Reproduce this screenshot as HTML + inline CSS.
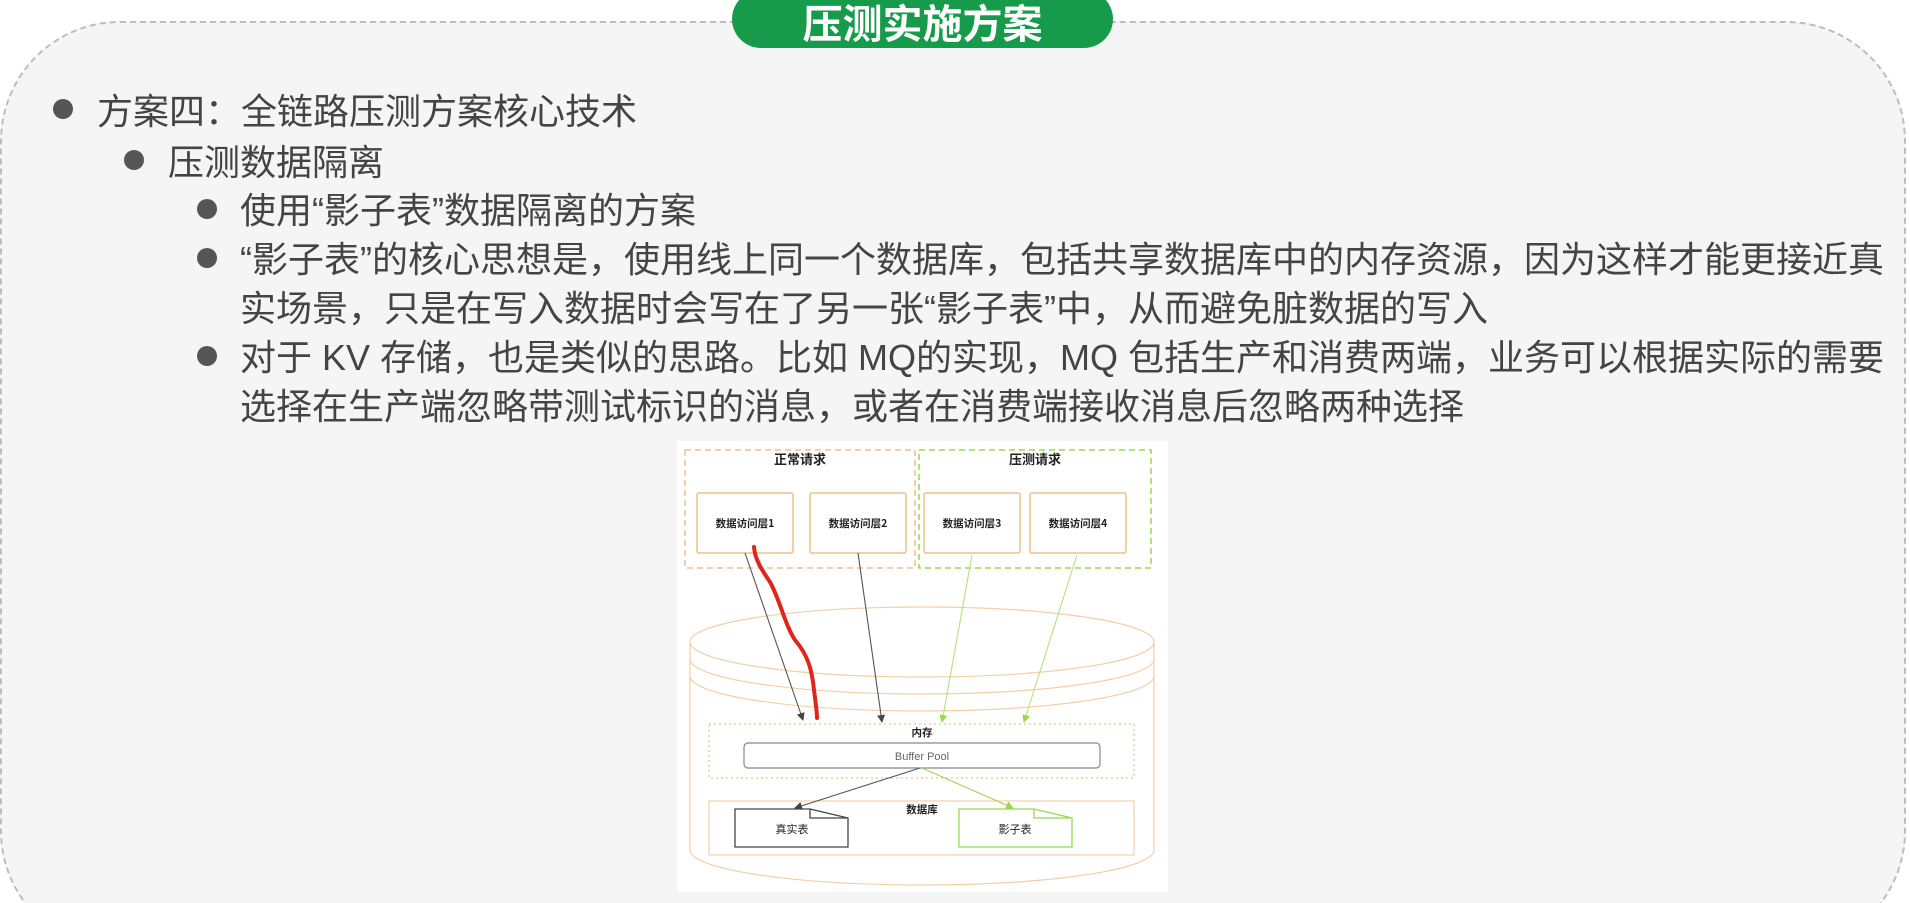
<!DOCTYPE html>
<html><head><meta charset="utf-8"><style>
html,body{margin:0;padding:0;width:1910px;height:903px;overflow:hidden;background:#fff;}
body{position:relative;font-family:"Liberation Sans","Noto Sans CJK SC",sans-serif;}
.clip{position:absolute;left:0;top:0;width:1910px;height:903px;overflow:hidden;}
.card{position:absolute;left:0;top:21px;width:1906px;height:930px;background:#f5f5f5;border:2px dashed #bdbdbd;border-radius:120px;box-sizing:border-box;}
.pill{position:absolute;left:732px;top:-10px;width:381px;height:58px;background:#169b4a;border-radius:30px;color:#fff;font-weight:bold;font-size:40px;text-align:center;line-height:62px;font-family:"Noto Sans CJK SC",sans-serif;}
.l{position:absolute;font-size:36px;color:#444;white-space:nowrap;font-family:"Liberation Sans","Noto Sans CJK SC",sans-serif;line-height:49px;}
.b{position:absolute;width:20px;height:20px;border-radius:50%;background:#555;}
.dia{position:absolute;left:677px;top:441px;width:491px;height:451px;background:#fff;}
</style></head><body>
<div class="clip">
<div class="card"></div>
<div class="pill">压测实施方案</div>

<div class="b" style="left:53px;top:99px"></div>
<div class="l" style="left:97px;top:87px">方案四：全链路压测方案核心技术</div>
<div class="b" style="left:124px;top:150px"></div>
<div class="l" style="left:168px;top:138px">压测数据隔离</div>
<div class="b" style="left:197px;top:199px"></div>
<div class="l" style="left:240px;top:186px">使用“影子表”数据隔离的方案</div>
<div class="b" style="left:197px;top:248px"></div>
<div class="l" style="left:240px;top:235px">“影子表”的核心思想是，使用线上同一个数据库，包括共享数据库中的内存资源，因为这样才能更接近真</div>
<div class="l" style="left:240px;top:284px">实场景，只是在写入数据时会写在了另一张“影子表”中，从而避免脏数据的写入</div>
<div class="b" style="left:197px;top:346px"></div>
<div class="l" style="left:240px;top:333px">对于 KV 存储，也是类似的思路。比如 MQ的实现，MQ 包括生产和消费两端，业务可以根据实际的需要</div>
<div class="l" style="left:240px;top:382px">选择在生产端忽略带测试标识的消息，或者在消费端接收消息后忽略两种选择</div>

<div class="dia"></div>
<svg style="position:absolute;left:0;top:0" width="1910" height="903" font-family="Noto Sans CJK SC,sans-serif">
<defs>
<marker id="ad" markerWidth="8" markerHeight="8" refX="7" refY="4" orient="auto" markerUnits="userSpaceOnUse"><path d="M0,0L8,4L0,8z" fill="#444"/></marker>
<marker id="ag" markerWidth="8" markerHeight="8" refX="7" refY="4" orient="auto" markerUnits="userSpaceOnUse"><path d="M0,0L8,4L0,8z" fill="#9bd84a"/></marker>
</defs>
<rect x="685" y="450" width="230" height="118" fill="none" stroke="#f0c089" stroke-width="1.5" stroke-dasharray="6,4"/>
<rect x="919" y="450" width="232" height="118" fill="none" stroke="#9bd84a" stroke-width="1.5" stroke-dasharray="6,4"/>
<text x="800" y="464" font-size="13" font-weight="bold" text-anchor="middle" fill="#222">正常请求</text>
<text x="1035" y="464" font-size="13" font-weight="bold" text-anchor="middle" fill="#222">压测请求</text>
<g fill="#fff" stroke="#f0c089" stroke-width="1.5">
<rect x="697" y="493" width="96" height="60" rx="2"/><rect x="810" y="493" width="96" height="60" rx="2"/>
<rect x="924" y="493" width="96" height="60" rx="2"/><rect x="1030" y="493" width="96" height="60" rx="2"/>
</g>
<g font-size="10.5" font-weight="bold" text-anchor="middle" fill="#222">
<text x="745" y="527">数据访问层1</text><text x="858" y="527">数据访问层2</text>
<text x="972" y="527">数据访问层3</text><text x="1078" y="527">数据访问层4</text>
</g>
<g fill="none" stroke="#f3cfa6" stroke-width="1.2">
<ellipse cx="922" cy="642" rx="232" ry="35"/>
<path d="M690,642 L690,850 A232,35 0 0 0 1154,850 L1154,642"/>
<path d="M690,659 A232,35 0 0 0 1154,659"/>
<path d="M690,676 A232,35 0 0 0 1154,676"/>
</g>
<rect x="709" y="724" width="425" height="54" fill="none" stroke="#f0c089" stroke-width="1.2" stroke-dasharray="2,3"/>
<text x="922" y="736" font-size="10.5" font-weight="bold" text-anchor="middle" fill="#222">内存</text>
<rect x="744" y="743" width="356" height="25" rx="4" fill="#fff" stroke="#888" stroke-width="1.2"/>
<text x="922" y="760" font-size="11" text-anchor="middle" fill="#666" font-family="Liberation Sans,sans-serif">Buffer Pool</text>
<rect x="709" y="801" width="425" height="54" fill="none" stroke="#f3cfa6" stroke-width="1.2"/>
<text x="922" y="813" font-size="10.5" font-weight="bold" text-anchor="middle" fill="#222">数据库</text>
<path d="M735,809 H810 V818 H848 V847 H735Z M810,809 L848,818" fill="#fff" stroke="#444" stroke-width="1.3"/>
<path d="M959,809 H1034 V818 H1072 V847 H959Z M1034,809 L1072,818" fill="#fff" stroke="#9bd84a" stroke-width="1.3"/>
<text x="792" y="833" font-size="11" text-anchor="middle" fill="#222">真实表</text>
<text x="1015" y="833" font-size="11" text-anchor="middle" fill="#222">影子表</text>
<g stroke-width="1.1" fill="none">
<line x1="745" y1="553" x2="803" y2="720" stroke="#555" marker-end="url(#ad)"/>
<line x1="858" y1="553" x2="882" y2="722" stroke="#555" marker-end="url(#ad)"/>
<line x1="972" y1="555" x2="942" y2="722" stroke="#b5e27a" marker-end="url(#ag)"/>
<line x1="1077" y1="555" x2="1024" y2="722" stroke="#b5e27a" marker-end="url(#ag)"/>
<line x1="920" y1="768" x2="795" y2="808" stroke="#555" marker-end="url(#ad)"/>
<line x1="922" y1="768" x2="1013" y2="808" stroke="#9bd84a" marker-end="url(#ag)"/>
</g>
<path d="M754,547 C755,560 762,570 770,582 C780,600 785,625 795,640 C808,655 812,670 814,690 C816,705 817,712 817,718" fill="none" stroke="#e0261c" stroke-width="4" stroke-linecap="round"/>
</svg>
</div>
</body></html>
